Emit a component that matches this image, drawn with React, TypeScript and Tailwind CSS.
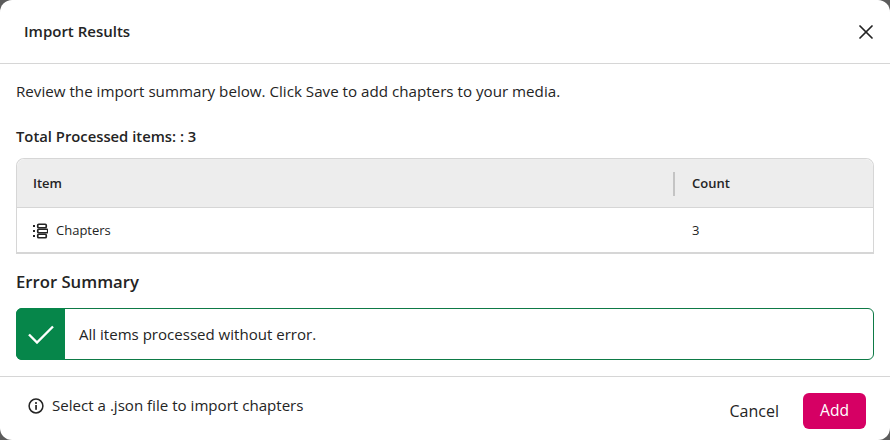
import { X } from "lucide-react";

function ChaptersIcon() {
  return (
    <svg width="16" height="16" viewBox="0 0 16 16" fill="none" className="shrink-0 text-[#242424]">
      <rect x="1" y="2" width="2" height="2" fill="currentColor" />
      <rect x="1" y="7" width="2" height="2" fill="currentColor" />
      <rect x="1" y="12" width="2" height="2" fill="currentColor" />
      <rect x="5.75" y="1.25" width="8.5" height="3.5" rx="1" stroke="currentColor" strokeWidth="1.7" />
      <rect x="5.75" y="6.25" width="10" height="3.5" rx="1" stroke="currentColor" strokeWidth="1.7" />
      <rect x="5.75" y="11.25" width="8.5" height="3.5" rx="1" stroke="currentColor" strokeWidth="1.7" />
    </svg>
  );
}

function InfoIcon() {
  return (
    <svg width="16" height="16" viewBox="0 0 16 16" fill="none" className="shrink-0 text-[#242424]">
      <circle cx="8" cy="8" r="6.9" stroke="currentColor" strokeWidth="1.5" />
      <rect x="7.2" y="7" width="1.7" height="4.8" fill="currentColor" />
      <circle cx="8" cy="5" r="1.1" fill="currentColor" />
    </svg>
  );
}

export default function App() {
  return (
    <div className="h-[440px] w-[890px] bg-[#5c5c5c] font-['Open_Sans','Noto_Sans',sans-serif] text-[#242424]">
      <div className="flex h-full flex-col overflow-hidden rounded-[12px] bg-white">
        <div className="flex h-[64px] items-center justify-between border-b border-[#d6d6d6] pl-[24px] pr-[12px]">
          <h1 className="text-[15px] font-semibold">Import Results</h1>
          <X size={24} strokeWidth={1.7} />
        </div>

        <div className="flex flex-1 flex-col px-[16px]">
          <p className="mt-[17px] text-[15.17px] leading-[20px]">
            Review the import summary below. Click Save to add chapters to your media.
          </p>
          <p className="mt-[25px] text-[14.8px] font-semibold leading-[20px]">Total Processed items: : 3</p>

          <div className="mt-[12px] rounded-t-[8px] border border-b-2 border-[#d6d6d6]">
            <div className="flex h-[49px] items-center rounded-t-[8px] border-b border-[#d6d6d6] bg-[#ededed] pt-px text-[13px] font-semibold">
              <div className="flex-1 pl-[16px]">Item</div>
              <div className="h-[24px] w-[2px] bg-[#c4c4c4]" />
              <div className="w-[198px] pl-[17px]">Count</div>
            </div>
            <div className="flex h-[44px] items-center pt-px text-[13px]">
              <div className="flex flex-1 items-center gap-[8px] pl-[15px]">
                <ChaptersIcon />
                Chapters
              </div>
              <div className="w-[200px] pl-[19px]">3</div>
            </div>
          </div>

          <h2 className="mt-[17px] text-[16.7px] font-semibold leading-[22px]">Error Summary</h2>

          <div className="mt-[15px] flex h-[52px] items-stretch rounded-[6px] border border-[#0e7a46]">
            <div className="-m-px flex w-[49px] items-center justify-center rounded-l-[6px] bg-[#06864a]">
              <svg width="26" height="19" viewBox="0 0 26 19" fill="none">
                <path d="M1 9.5 L9 17.5 L25 1.5" stroke="white" strokeWidth="2.4" />
              </svg>
            </div>
            <div className="flex items-center pl-[15px] text-[15.05px]">All items processed without error.</div>
          </div>
        </div>

        <div className="flex h-[64px] items-start justify-between border-t border-[#d6d6d6] pl-[28px] pr-[24px] pt-[16px]">
          <div className="flex h-[25px] items-center gap-[8px] text-[15.1px]">
            <InfoIcon />
            Select a .json file to import chapters
          </div>
          <div className="flex items-center gap-[24px]">
            <button className="text-[16px]">Cancel</button>
            <button className="h-[36px] w-[63px] rounded-[6px] bg-[#d60064] text-[15.6px] font-medium text-white">
              Add
            </button>
          </div>
        </div>
      </div>
    </div>
  );
}
